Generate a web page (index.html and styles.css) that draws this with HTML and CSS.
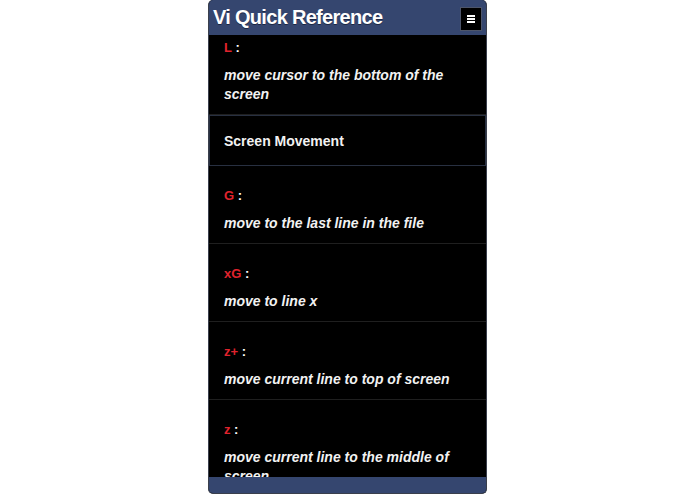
FILE: index.html
```html
<!DOCTYPE html>
<html lang="en">
<head>
    <meta charset="UTF-8">
    <meta name="viewport" content="width=device-width, initial-scale=1.0">
    <title>Vi Quick Reference</title>
    <link rel="stylesheet" href="styles.css">
</head>
<body>

<div class="app">
    <header class="topbar">
        <h1>Vi Quick Reference</h1>
        <button class="menu-button" aria-label="Menu">
            <span></span><span></span><span></span>
        </button>
    </header>

    <div class="content">
        <ul class="cmd-list">
            <li class="cmd">
                <p class="key"><b>L</b> :</p>
                <p class="desc">move cursor to the bottom of the screen</p>
            </li>
            <li class="divider">Screen Movement</li>
            <li class="cmd">
                <p class="key"><b>G</b> :</p>
                <p class="desc">move to the last line in the file</p>
            </li>
            <li class="cmd">
                <p class="key"><b>xG</b> :</p>
                <p class="desc">move to line x</p>
            </li>
            <li class="cmd">
                <p class="key"><b>z+</b> :</p>
                <p class="desc">move current line to top of screen</p>
            </li>
            <li class="cmd">
                <p class="key"><b>z</b> :</p>
                <p class="desc">move current line to the middle of screen</p>
            </li>
        </ul>
    </div>

    <footer class="bottombar"></footer>
</div>

</body>
</html>
```

FILE: styles.css
```css
body {
    font-family: 'Liberation Sans', Arial, sans-serif;
    background: white;
    margin: 0;
    padding: 0;
    display: flex;
    justify-content: center;
}
.app {
    width: 277px;
    height: 493px;
    display: flex;
    flex-direction: column;
    background: #000;
    border: 1px solid #3a3f4c;
    border-top: none;
    border-radius: 5px;
    overflow: hidden;
}
.topbar {
    height: 35px;
    flex-shrink: 0;
    background: #35466f;
    display: flex;
    align-items: center;
    justify-content: space-between;
    padding: 0 4px 0 4px;
}
.topbar h1 {
    margin: 0;
    font-size: 20px;
    font-weight: bold;
    color: white;
    letter-spacing: -0.7px;
    text-shadow: 0 1px 0 #1c2744;
}
.menu-button {
    width: 22px;
    height: 24px;
    margin-top: 3px;
    background: #000;
    border: 1px solid #4d556a;
    padding: 0;
    display: flex;
    flex-direction: column;
    align-items: center;
    justify-content: center;
    gap: 1px;
    cursor: pointer;
}
.menu-button span {
    display: block;
    width: 8px;
    height: 2px;
    background: white;
}
.content {
    flex: 1;
    overflow: hidden;
}
/* list is scrolled a little, so the first item sits under the bar */
.cmd-list {
    list-style: none;
    margin: -17px 0 0 0;
    padding: 0;
}
.cmd {
    padding: 22px 15px 10px;
    border-bottom: 1px solid #1f1f1f;
}
.cmd p {
    margin: 0;
}
.key {
    font-size: 13px;
    line-height: 16px;
    font-weight: bold;
    color: white;
    margin-bottom: 10px !important;
}
.key b {
    color: #e0232d;
}
.desc {
    font-size: 14px;
    line-height: 19px;
    font-style: italic;
    font-weight: bold;
    color: #f2f2f2;
}
.divider {
    height: 49px;
    display: flex;
    align-items: center;
    padding: 0 14px;
    border: 1px solid #283041;
    font-size: 14px;
    font-weight: bold;
    color: #f2f2f2;
}
.bottombar {
    height: 16px;
    flex-shrink: 0;
    background: #35466f;
}
```
